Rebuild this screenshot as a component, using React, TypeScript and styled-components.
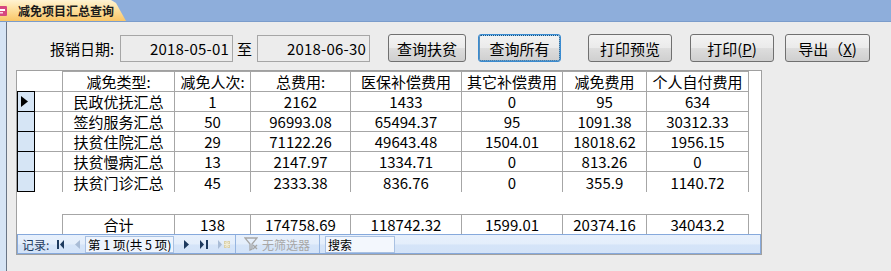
import React from 'react';
import styled, { createGlobalStyle } from 'styled-components';

const GlobalStyle = createGlobalStyle`
  html, body {
    margin: 0;
    padding: 0;
    background: #ececec;
  }
  body {
    font-family: "Noto Sans CJK SC", "Liberation Sans", sans-serif;
    color: #000;
  }
  #root {
    width: 891px;
    height: 271px;
    overflow: hidden;
  }
`;

const COLS = '18px 27px 113px 76px 100px 111px 101px 84px 102px 1fr';
const GRID = '#a6a6a6';

const Page = styled.div`
  display: flex;
  flex-direction: column;
  height: 271px;
`;

const TabBar = styled.div`
  background: #8eaedb;
  height: 22px;
  display: flex;
  align-items: flex-end;
  border-bottom: 1px solid #7b9ccb;
  box-sizing: border-box;
`;

const Tab = styled.div`
  height: 21px;
  width: 126px;
  display: flex;
  align-items: center;
  background: linear-gradient(#fff3d2 0%, #fde0a0 45%, #f9c566 100%);
  clip-path: polygon(0 0, 111px 0, 116px 3px, 126px 21px, 0 21px);
  font-size: 12px;
  font-weight: bold;
  color: #1b1b1b;
  gap: 10px;
`;

const Body = styled.div`
  flex: 1;
  display: flex;
`;

const LeftStrip = styled.div`
  width: 6px;
  background: #d6e4f4;
  border-right: 1px solid #6a7585;
`;

const Main = styled.div`
  flex: 1;
  padding-top: 12px;
`;

const FilterRow = styled.div`
  display: flex;
  align-items: center;
  height: 28px;
  padding-left: 43px;
  font-size: 15px;
`;

const Label = styled.span`
  width: 70px;
  font-size: 15px;
`;

const DateBox = styled.div`
  width: 113px;
  height: 27px;
  box-sizing: border-box;
  border: 1px solid #a6a6a6;
  display: flex;
  align-items: center;
  justify-content: flex-end;
  padding-right: 3px;
  font-size: 15px;
  letter-spacing: 0.2px;
`;

const To = styled.span`
  margin: 0 5px 0 4px;
  font-size: 15px;
`;

const Button = styled.button<{ $w: number; $ml: number; $focus?: boolean }>`
  width: ${(p) => p.$w}px;
  margin-left: ${(p) => p.$ml}px;
  height: 28px;
  box-sizing: border-box;
  border: 1px solid ${(p) => (p.$focus ? '#3a8bd0' : '#707070')};
  border-radius: 3px;
  background: linear-gradient(#f3f3f3 0%, #ebebeb 48%, #dddddd 52%, #cfcfcf 100%);
  font-family: "Noto Sans CJK SC", sans-serif;
  font-size: 15px;
  color: #000;
  padding: 0;
  outline: ${(p) => (p.$focus ? '1px dotted #1a4f80' : 'none')};
  outline-offset: -2px;
  box-shadow: ${(p) => (p.$focus ? 'inset 0 0 0 1px #9fd3f5' : 'none')};
`;

const Sheet = styled.div`
  margin: 8px 0 0 9px;
  width: 746px;
  height: 185px;
  box-sizing: border-box;
  border: 1px solid #a0a0a0;
  background: #fff;
  display: flex;
  flex-direction: column;
  font-size: 15px;
`;

const Row = styled.div<{ $h: number }>`
  display: grid;
  grid-template-columns: ${COLS};
  height: ${(p) => p.$h}px;
`;

const Sel = styled.div`
  background: #d6e5f5;
  border: 1px solid #000;
  border-top: none;
  display: flex;
  align-items: center;
  padding-left: 3px;
`;

const Gap = styled.div<{ $line?: string }>`
  border-bottom: 1px solid ${(p) => p.$line || GRID};
`;

const Cell = styled.div<{ $lead?: boolean; $head?: boolean; $bottom?: boolean }>`
  border-right: 1px solid ${GRID};
  border-left: ${(p) => (p.$lead ? `1px solid ${GRID}` : 'none')};
  border-top: ${(p) => (p.$head ? `1px solid ${GRID}` : 'none')};
  border-bottom: ${(p) => (p.$bottom ? `1px solid ${GRID}` : 'none')};
  display: flex;
  align-items: center;
  justify-content: center;
  white-space: nowrap;
  overflow: hidden;
`;

const Spacer = styled.div`
  flex: 1;
`;

const Nav = styled.div`
  height: 20px;
  box-sizing: border-box;
  border: 1px solid #86a9dc;
  background: linear-gradient(#e7f0fc 0%, #e4eefb 50%, #d5e4f8 55%, #d3e3f8 100%);
  display: flex;
  align-items: center;
  font-size: 12px;
  color: #1e3a5e;
`;

const NavLabel = styled.span`
  margin-left: 4px;
  width: 35px;
`;

const NavIcon = styled.svg<{ $ml: number }>`
  margin-left: ${(p) => p.$ml}px;
  flex: none;
`;

const RecordBox = styled.div`
  margin-left: 5px;
  width: 89px;
  height: 17px;
  box-sizing: border-box;
  border: 1px solid #a9c1e2;
  background: #eef4fd;
  font-size: 12.5px;
  color: #000;
  display: flex;
  align-items: center;
  padding-left: 2px;
  white-space: pre;
  overflow: hidden;
`;

const NavSep = styled.div<{ $ml: number }>`
  margin-left: ${(p) => p.$ml}px;
  width: 1px;
  height: 18px;
  background: #96b5e0;
`;

const FilterText = styled.span`
  margin-left: 4px;
  width: 48px;
  font-size: 12px;
  color: #a7a7a7;
`;

const SearchBox = styled.div`
  margin-left: 5px;
  width: 70px;
  height: 17px;
  box-sizing: border-box;
  border: 1px solid #a9c1e2;
  background: #f3f7fd;
  font-size: 12px;
  color: #000;
  display: flex;
  align-items: center;
  padding-left: 2px;
`;

const headers = ['减免类型:', '减免人次:', '总费用:', '医保补偿费用', '其它补偿费用', '减免费用', '个人自付费用'];

const rows = [
  ['民政优抚汇总', '1', '2162', '1433', '0', '95', '634'],
  ['签约服务汇总', '50', '96993.08', '65494.37', '95', '1091.38', '30312.33'],
  ['扶贫住院汇总', '29', '71122.26', '49643.48', '1504.01', '18018.62', '1956.15'],
  ['扶贫慢病汇总', '13', '2147.97', '1334.71', '0', '813.26', '0'],
  ['扶贫门诊汇总', '45', '2333.38', '836.76', '0', '355.9', '1140.72'],
];

const totals = ['合计', '138', '174758.69', '118742.32', '1599.01', '20374.16', '34043.2'];

export default function App() {
  return (
    <Page>
      <GlobalStyle />
      <TabBar>
        <Tab>
          <svg width="8" height="12" viewBox="0 0 8 12">
            <rect x="-3" y="1" width="10" height="10" rx="1" fill="#d7477f" />
            <rect x="-1" y="4" width="6" height="2" fill="#fff" />
            <rect x="-1" y="7" width="4" height="1.5" fill="#fbd3e2" />
          </svg>
          减免项目汇总查询
        </Tab>
      </TabBar>
      <Body>
        <LeftStrip />
        <Main>
          <FilterRow>
            <Label>报销日期:</Label>
            <DateBox>2018-05-01</DateBox>
            <To>至</To>
            <DateBox>2018-06-30</DateBox>
            <Button $w={78} $ml={18}>查询扶贫</Button>
            <Button $w={83} $ml={12} $focus>查询所有</Button>
            <Button $w={84} $ml={27}>打印预览</Button>
            <Button $w={84} $ml={18}>打印(<u>P</u>)</Button>
            <Button $w={85} $ml={11}>导出（<u>X</u>)</Button>
          </FilterRow>

          <Sheet>
            <Row $h={21}>
              <Gap $line="#000" />
              <Gap />
              {headers.map((h, i) => (
                <Cell key={h} $lead={i === 0} $head $bottom>
                  {h}
                </Cell>
              ))}
            </Row>
            {rows.map((r, ri) => (
              <Row $h={20} key={r[0]}>
                <Sel>
                  {ri === 0 && (
                    <svg width="7" height="11" viewBox="0 0 7 11">
                      <path d="M0 0 L7 5.5 L0 11 Z" fill="#000" />
                    </svg>
                  )}
                </Sel>
                <Gap $line={ri === rows.length - 1 ? 'transparent' : GRID} />
                {r.map((v, i) => (
                  <Cell key={i} $lead={i === 0} $bottom={ri !== rows.length - 1}>
                    {v}
                  </Cell>
                ))}
              </Row>
            ))}
            <Spacer />
            <Row $h={20}>
              <div />
              <div />
              {totals.map((v, i) => (
                <Cell key={i} $lead={i === 0} $head>
                  {v}
                </Cell>
              ))}
            </Row>
            <Nav>
              <NavLabel>记录:</NavLabel>
              <NavIcon $ml={0} width="8" height="9" viewBox="0 0 8 9">
                <rect x="0" y="0" width="2" height="9" fill="#1e3a5e" />
                <path d="M7 0 L3 4.5 L7 9 Z" fill="#1e3a5e" />
              </NavIcon>
              <NavIcon $ml={10} width="5" height="9" viewBox="0 0 5 9">
                <path d="M5 0 L0 4.5 L5 9 Z" fill="#a9bcd6" />
              </NavIcon>
              <RecordBox>第 1 项(共 5 项)</RecordBox>
              <NavIcon $ml={10} width="5" height="9" viewBox="0 0 5 9">
                <path d="M0 0 L5 4.5 L0 9 Z" fill="#1e3a5e" />
              </NavIcon>
              <NavIcon $ml={11} width="8" height="9" viewBox="0 0 8 9">
                <path d="M0 0 L4 4.5 L0 9 Z" fill="#1e3a5e" />
                <rect x="6" y="0" width="2" height="9" fill="#1e3a5e" />
              </NavIcon>
              <NavIcon $ml={10} width="12" height="9" viewBox="0 0 12 9">
                <path d="M0 0 L4 4.5 L0 9 Z" fill="#a9bcd6" />
                <rect x="6" y="1" width="6" height="7" fill="#d8cfa8" />
                <path d="M7 2 L11 7 M11 2 L7 7 M9 1 L9 8 M6 4.5 L12 4.5" stroke="#f1ecd6" strokeWidth="1" />
              </NavIcon>
              <NavSep $ml={5} />
              <NavIcon $ml={8} width="14" height="14" viewBox="0 0 14 14">
                <path d="M1 1 L13 1 L8 7 L8 12 L6 13 L6 7 Z" fill="none" stroke="#a6a6a6" strokeWidth="1.3" />
                <path d="M9 8 L13 12 M13 8 L9 12" stroke="#a6a6a6" strokeWidth="1.3" />
              </NavIcon>
              <FilterText>无筛选器</FilterText>
              <NavSep $ml={9} />
              <SearchBox>搜索</SearchBox>
            </Nav>
          </Sheet>
        </Main>
      </Body>
    </Page>
  );
}
